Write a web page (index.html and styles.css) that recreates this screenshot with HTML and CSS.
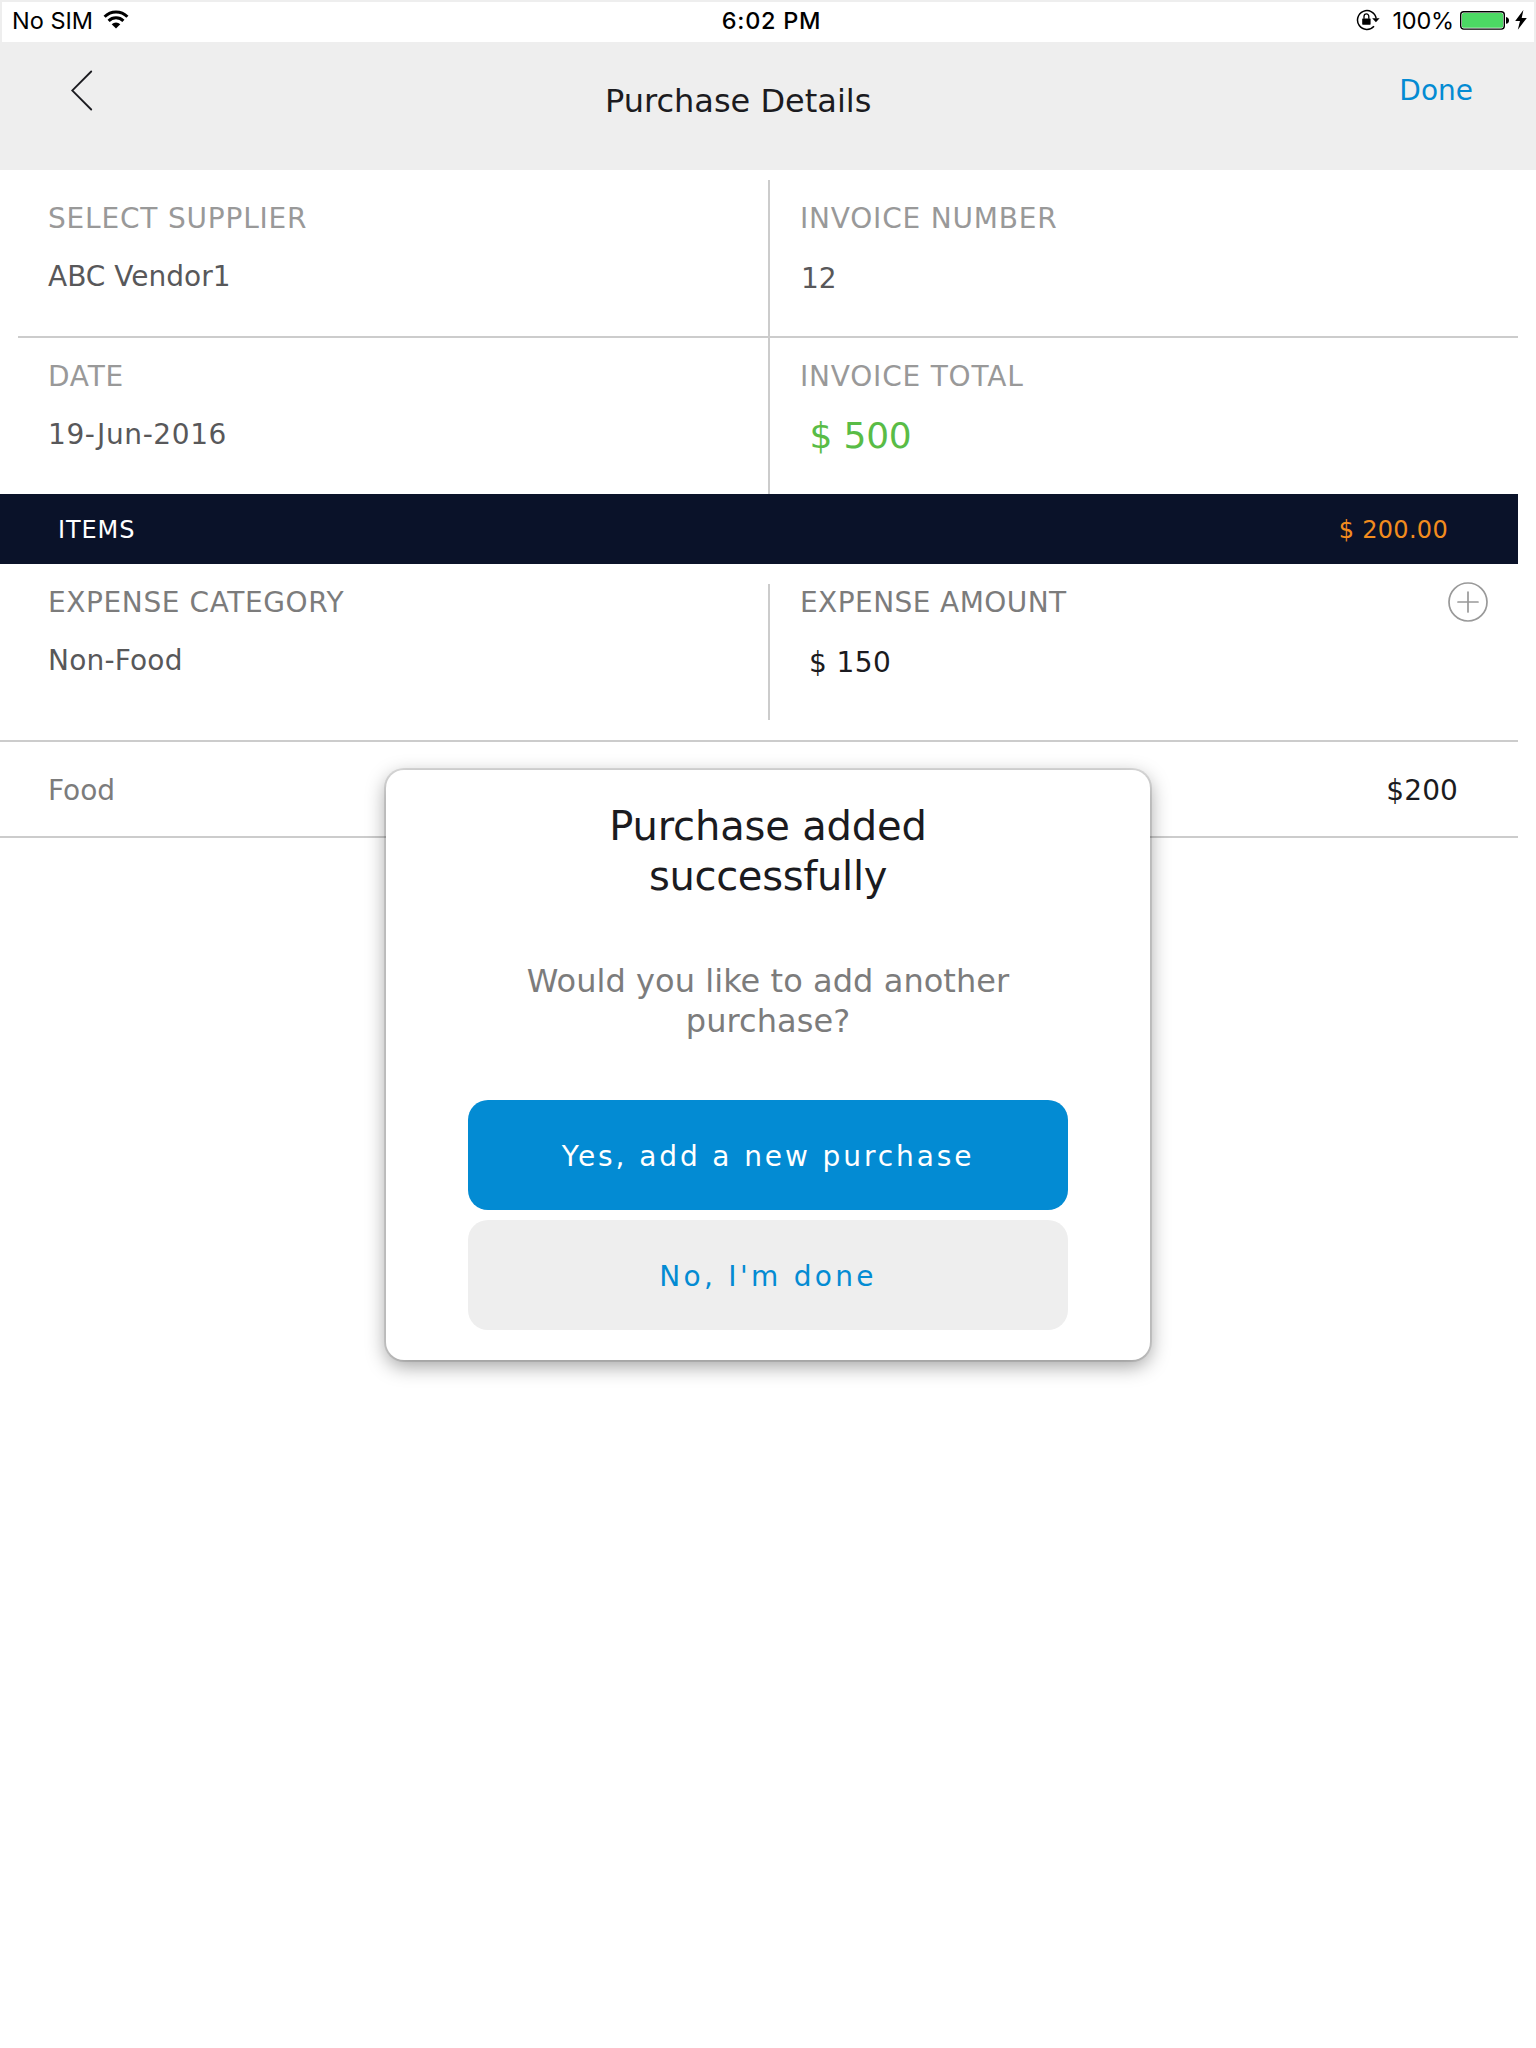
FILE: index.html
```html
<!DOCTYPE html>
<html lang="en">
<head>
<meta charset="utf-8">
<title>Purchase Details</title>
<link rel="stylesheet" href="styles.css">
</head>
<body>
<div class="status">
  <div class="status-left">
    <span class="carrier">No SIM</span>
    <svg class="wifi" width="26" height="20" viewBox="0 0 26 20">
      <g fill="none" stroke="#000" stroke-width="3">
        <path d="M1.6 6.7a16.2 16.2 0 0 1 22.8 0"/>
        <path d="M5.6 10.9a10.5 10.5 0 0 1 14.8 0"/>
      </g>
      <path d="M13 18.6l-4.3-4.3a6.1 6.1 0 0 1 8.6 0z"/>
    </svg>
  </div>
  <span class="clock">6:02 PM</span>
  <div class="status-right">
    <svg class="lock" width="24" height="22" viewBox="0 0 24 22">
      <path d="M18 17.2A9.400 9.400 0 1 1 20.200 9.500" fill="none" stroke="#000" stroke-width="1.5"/>
      <path d="M16.2 9.2h7.4l-3.7 4z"/>
      <rect x="6.2" y="9.5" width="8.4" height="6.2" rx=".6"/>
      <path d="M8 9.8V7.6a2.4 2.8 0 0 1 4.8 0v2.2" fill="none" stroke="#000" stroke-width="1.3"/>
    </svg>
    <span class="percent">100%</span>
    <svg class="battery" width="50" height="20" viewBox="0 0 50 20">
      <rect x=".7" y="1.7" width="43.6" height="17.4" rx="3" fill="#fff" stroke="#000" stroke-width="1.4"/>
      <rect x="2" y="3" width="41" height="14.8" rx="1.6" fill="#4cd964"/>
      <path d="M46 7q3 .6 3 3.4t-3 3.4z"/>
    </svg>
    <svg class="bolt" width="12" height="20" viewBox="0 0 12 20">
      <path d="M8.400 0L.2 11h4.800L2.800 19.800 11.800 8H6.700z"/>
    </svg>
  </div>
</div>

<header class="header">
  <svg class="back" width="22" height="42" viewBox="0 0 22 42">
    <path d="M20.200 1.500L1.200 20.500l19 19" fill="none" stroke="#1b1b20" stroke-width="1.8" stroke-linecap="round"/>
  </svg>
  <h1 class="title">Purchase Details</h1>
  <a class="done">Done</a>
</header>

<main class="content">
  <section class="invoice">
    <div class="row ruled">
      <div class="cell">
        <div class="label">SELECT SUPPLIER</div>
        <div class="value vendor">ABC Vendor1</div>
      </div>
      <div class="cell right">
        <div class="label wide">INVOICE NUMBER</div>
        <div class="value number">12</div>
      </div>
    </div>
    <div class="row second">
      <div class="cell">
        <div class="label">DATE</div>
        <div class="value date">19-Jun-2016</div>
      </div>
      <div class="cell right">
        <div class="label wide">INVOICE TOTAL</div>
        <div class="total">$ 500</div>
      </div>
    </div>
  </section>

  <div class="items">
    <span class="items-name">ITEMS</span>
    <span class="items-sum">$ 200.00</span>
  </div>

  <section class="expense">
    <div class="cell">
      <div class="label dark category-label">EXPENSE CATEGORY</div>
      <div class="value category">Non-Food</div>
    </div>
    <div class="cell right">
      <div class="label dark">EXPENSE AMOUNT</div>
      <div class="amount">$ 150</div>
    </div>
    <svg class="add" width="40" height="40" viewBox="0 0 40 40">
      <g fill="none" stroke="#999" stroke-width="1.7" stroke-linecap="round">
        <circle cx="20" cy="20" r="19"/>
        <path d="M20 10v20M10 20h20"/>
      </g>
    </svg>
  </section>

  <div class="entry">
    <span class="entry-name">Food</span>
    <span class="entry-sum">$200</span>
  </div>
</main>

<div class="dialog">
  <h2 class="dialog-title">Purchase added<br><span class="tight">successfully</span></h2>
  <p class="dialog-text">Would you like to add another<br>purchase?</p>
  <button class="button primary">Yes, add a new purchase</button>
  <button class="button secondary">No, I'm done</button>
</div>
</body>
</html>
```
FILE: styles.css
```css
* {
  box-sizing: border-box;
  margin: 0;
}

body {
  width: 1536px;
  height: 2048px;
  overflow: hidden;
  position: relative;
  background: #fff;
  font-family: "DejaVu Sans", Verdana, sans-serif;
  font-size: 28px;
  line-height: 40px;
  color: #1b1b20;
}

/* Status bar */
.status {
  display: grid;
  grid-template-columns: 1fr auto 1fr;
  height: 42px;
  border: 2px solid #eee;
  border-bottom: 0;
  font-family: Inter, "Liberation Sans", sans-serif;
  font-size: 23.5px;
  line-height: 38px;
  color: #000;
}

.status-left,
.status-right {
  display: flex;
  align-items: flex-start;
}

.status-left {
  padding-left: 10px;
}

.status-right {
  justify-content: flex-end;
  padding-right: 7px;
}

.wifi {
  margin: 8px 0 0 10px;
}

.clock {
  font-weight: 500;
  letter-spacing: 0.7px;
  padding-left: 7px;
}

.lock {
  margin: 7px 13px 0 0;
}

.percent {
  letter-spacing: -0.2px;
}

.battery {
  margin: 8px 5px 0 6px;
}

.bolt {
  margin-top: 8px;
}

/* Title bar */
.header {
  display: flex;
  justify-content: space-between;
  align-items: flex-start;
  height: 128px;
  padding: 0 63px 0 71px;
  background: #eee;
}

.back {
  margin-top: 28px;
}

.title {
  margin: 39px 16px 0 0;
  font-size: 32px;
  font-weight: 400;
}

.done {
  margin-top: 29px;
  color: #038bd3;
}

/* Invoice fields */
.content {
  width: 1518px;
}

.invoice {
  padding: 10px 0 0 18px;
}

.row {
  display: flex;
  height: 158px;
}

.ruled {
  border-bottom: 2px solid #ccc;
}

.second {
  height: 156px;
}

.cell {
  width: 750px;
  padding: 19px 0 0 30px;
}

.cell.right {
  border-left: 2px solid #ccc;
  padding-left: 30px;
}

.label {
  letter-spacing: 0.8px;
  color: #999;
}

.dark {
  letter-spacing: 0.42px;
  color: #7c7c7c;
}

.category-label {
  letter-spacing: 0.6px;
}

.value {
  padding-top: 18px;
  color: #58585a;
}

.vendor {
  letter-spacing: 0;
}

.number {
  padding: 20px 0 0 1px;
}

.date {
  letter-spacing: 0.6px;
}

.category {
  letter-spacing: 0.2px;
}

.total {
  padding: 19px 0 0 9.5px;
  font-size: 36px;
  letter-spacing: -0.2px;
  color: #59bc46;
}

/* Items bar */
.items {
  display: flex;
  justify-content: space-between;
  height: 70px;
  padding: 1px 70px 0 58px;
  background: #0a1229;
  font-size: 24px;
  line-height: 70px;
}

.items-name {
  letter-spacing: 0.9px;
  color: #fff;
}

.items-sum {
  letter-spacing: 0.3px;
  color: #f28c1e;
}

/* Expense entry */
.expense {
  display: flex;
  height: 178px;
  padding-top: 20px;
  border-bottom: 2px solid #ccc;
}

.expense .cell {
  width: 768px;
  height: 136px;
  padding: 0 0 0 48px;
}

.expense .right {
  width: 678px;
  padding-left: 30px;
}

.expense .label {
  margin-top: -1px;
}

.amount {
  padding: 20px 0 0 9px;
  letter-spacing: 0.4px;
}

.add {
  margin: -2px 0 0 2px;
}

.entry {
  display: flex;
  justify-content: space-between;
  height: 96px;
  padding: 29px 60px 0 48px;
  border-bottom: 2px solid #ccc;
}

.entry-name {
  color: #7c7c7c;
}

.entry-sum {
  letter-spacing: 0.1px;
}

/* Confirmation dialog, over the page */
.dialog {
  position: absolute;
  top: 770px;
  left: 386px;
  width: 764px;
  height: 590px;
  padding: 31px 82px 0;
  border-radius: 18px;
  background: #fff;
  box-shadow: 0 0 0 2px rgba(0, 0, 0, 0.11), 0 6px 20px rgba(0, 0, 0, 0.38);
  text-align: center;
}

.dialog-title {
  font-size: 40px;
  font-weight: 400;
  line-height: 50px;
  letter-spacing: -0.15px;
}

.tight {
  letter-spacing: -0.3px;
}

.dialog-text {
  padding-top: 60px;
  font-size: 32px;
  letter-spacing: 0.06px;
  color: #7c7c7c;
}

.button {
  display: block;
  width: 600px;
  height: 110px;
  padding: 3px 0 0;
  border: 0;
  border-radius: 20px;
  font: inherit;
  letter-spacing: 2.9px;
}

.primary {
  margin-top: 59px;
  background: #038bd3;
  color: #fff;
}

.secondary {
  margin-top: 10px;
  background: #eee;
  color: #038bd3;
  letter-spacing: 3.3px;
}
```
